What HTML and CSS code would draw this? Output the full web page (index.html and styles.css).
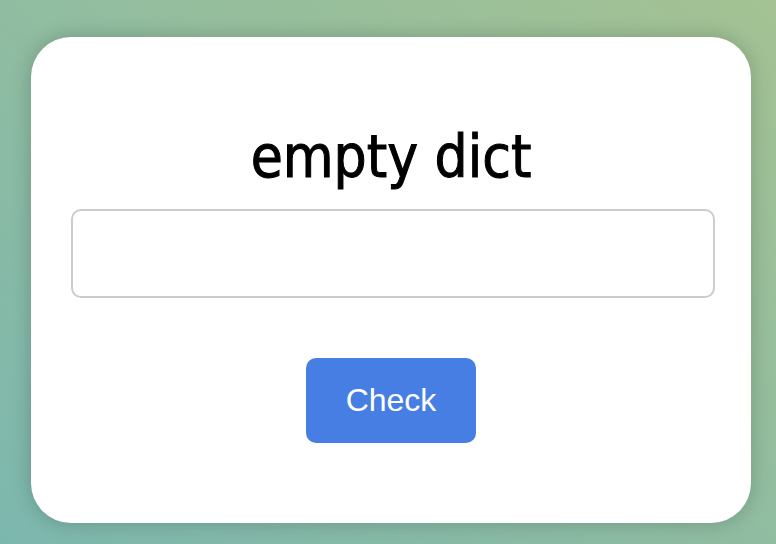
FILE: index.html
```html
<!DOCTYPE html>
<html lang="en">
<head>
<meta charset="utf-8">
<meta name="viewport" content="width=device-width, initial-scale=1">
<title>Quiz</title>
<link rel="stylesheet" href="styles.css">
</head>
<body>
<form class="card">
<label class="question" for="answer">empty dict</label>
<input class="answer" id="answer" type="text" autocomplete="off">
<button class="check" type="button">Check</button>
</form>
</body>
</html>
```
FILE: styles.css
```css
* {
  box-sizing: border-box;
}

body {
  min-height: 100vh;
  margin: 0;
  padding: 37px 25px 21px 31px;
  background: linear-gradient(to top right, #7cb7ae, #a4c293);
}

.card {
  display: flex;
  flex-direction: column;
  align-items: center;
  padding: 80px 40px;
  border-radius: 40px;
  background: #fff;
  box-shadow: 0 0 20px rgba(0, 0, 0, 0.2);
}

.question {
  margin-bottom: 12px;
  color: #000;
  font: 58px/80px Tahoma, "DejaVu Sans Condensed", "DejaVu Sans", sans-serif;
  -webkit-text-stroke: 1px #000;
}

.answer {
  align-self: flex-start;
  width: calc(100% + 4px);
  height: 89px;
  margin-bottom: 60px;
  padding: 20px;
  border: 2px solid #ccc;
  border-radius: 10px;
  background: #fff;
  font: 32px "Liberation Sans", Arial, sans-serif;
}

.check {
  height: 85px;
  padding: 0 40px;
  border: 0;
  border-radius: 10px;
  background: #477ee4;
  color: #fff;
  font: 32px "Liberation Sans", Arial, sans-serif;
}
```
